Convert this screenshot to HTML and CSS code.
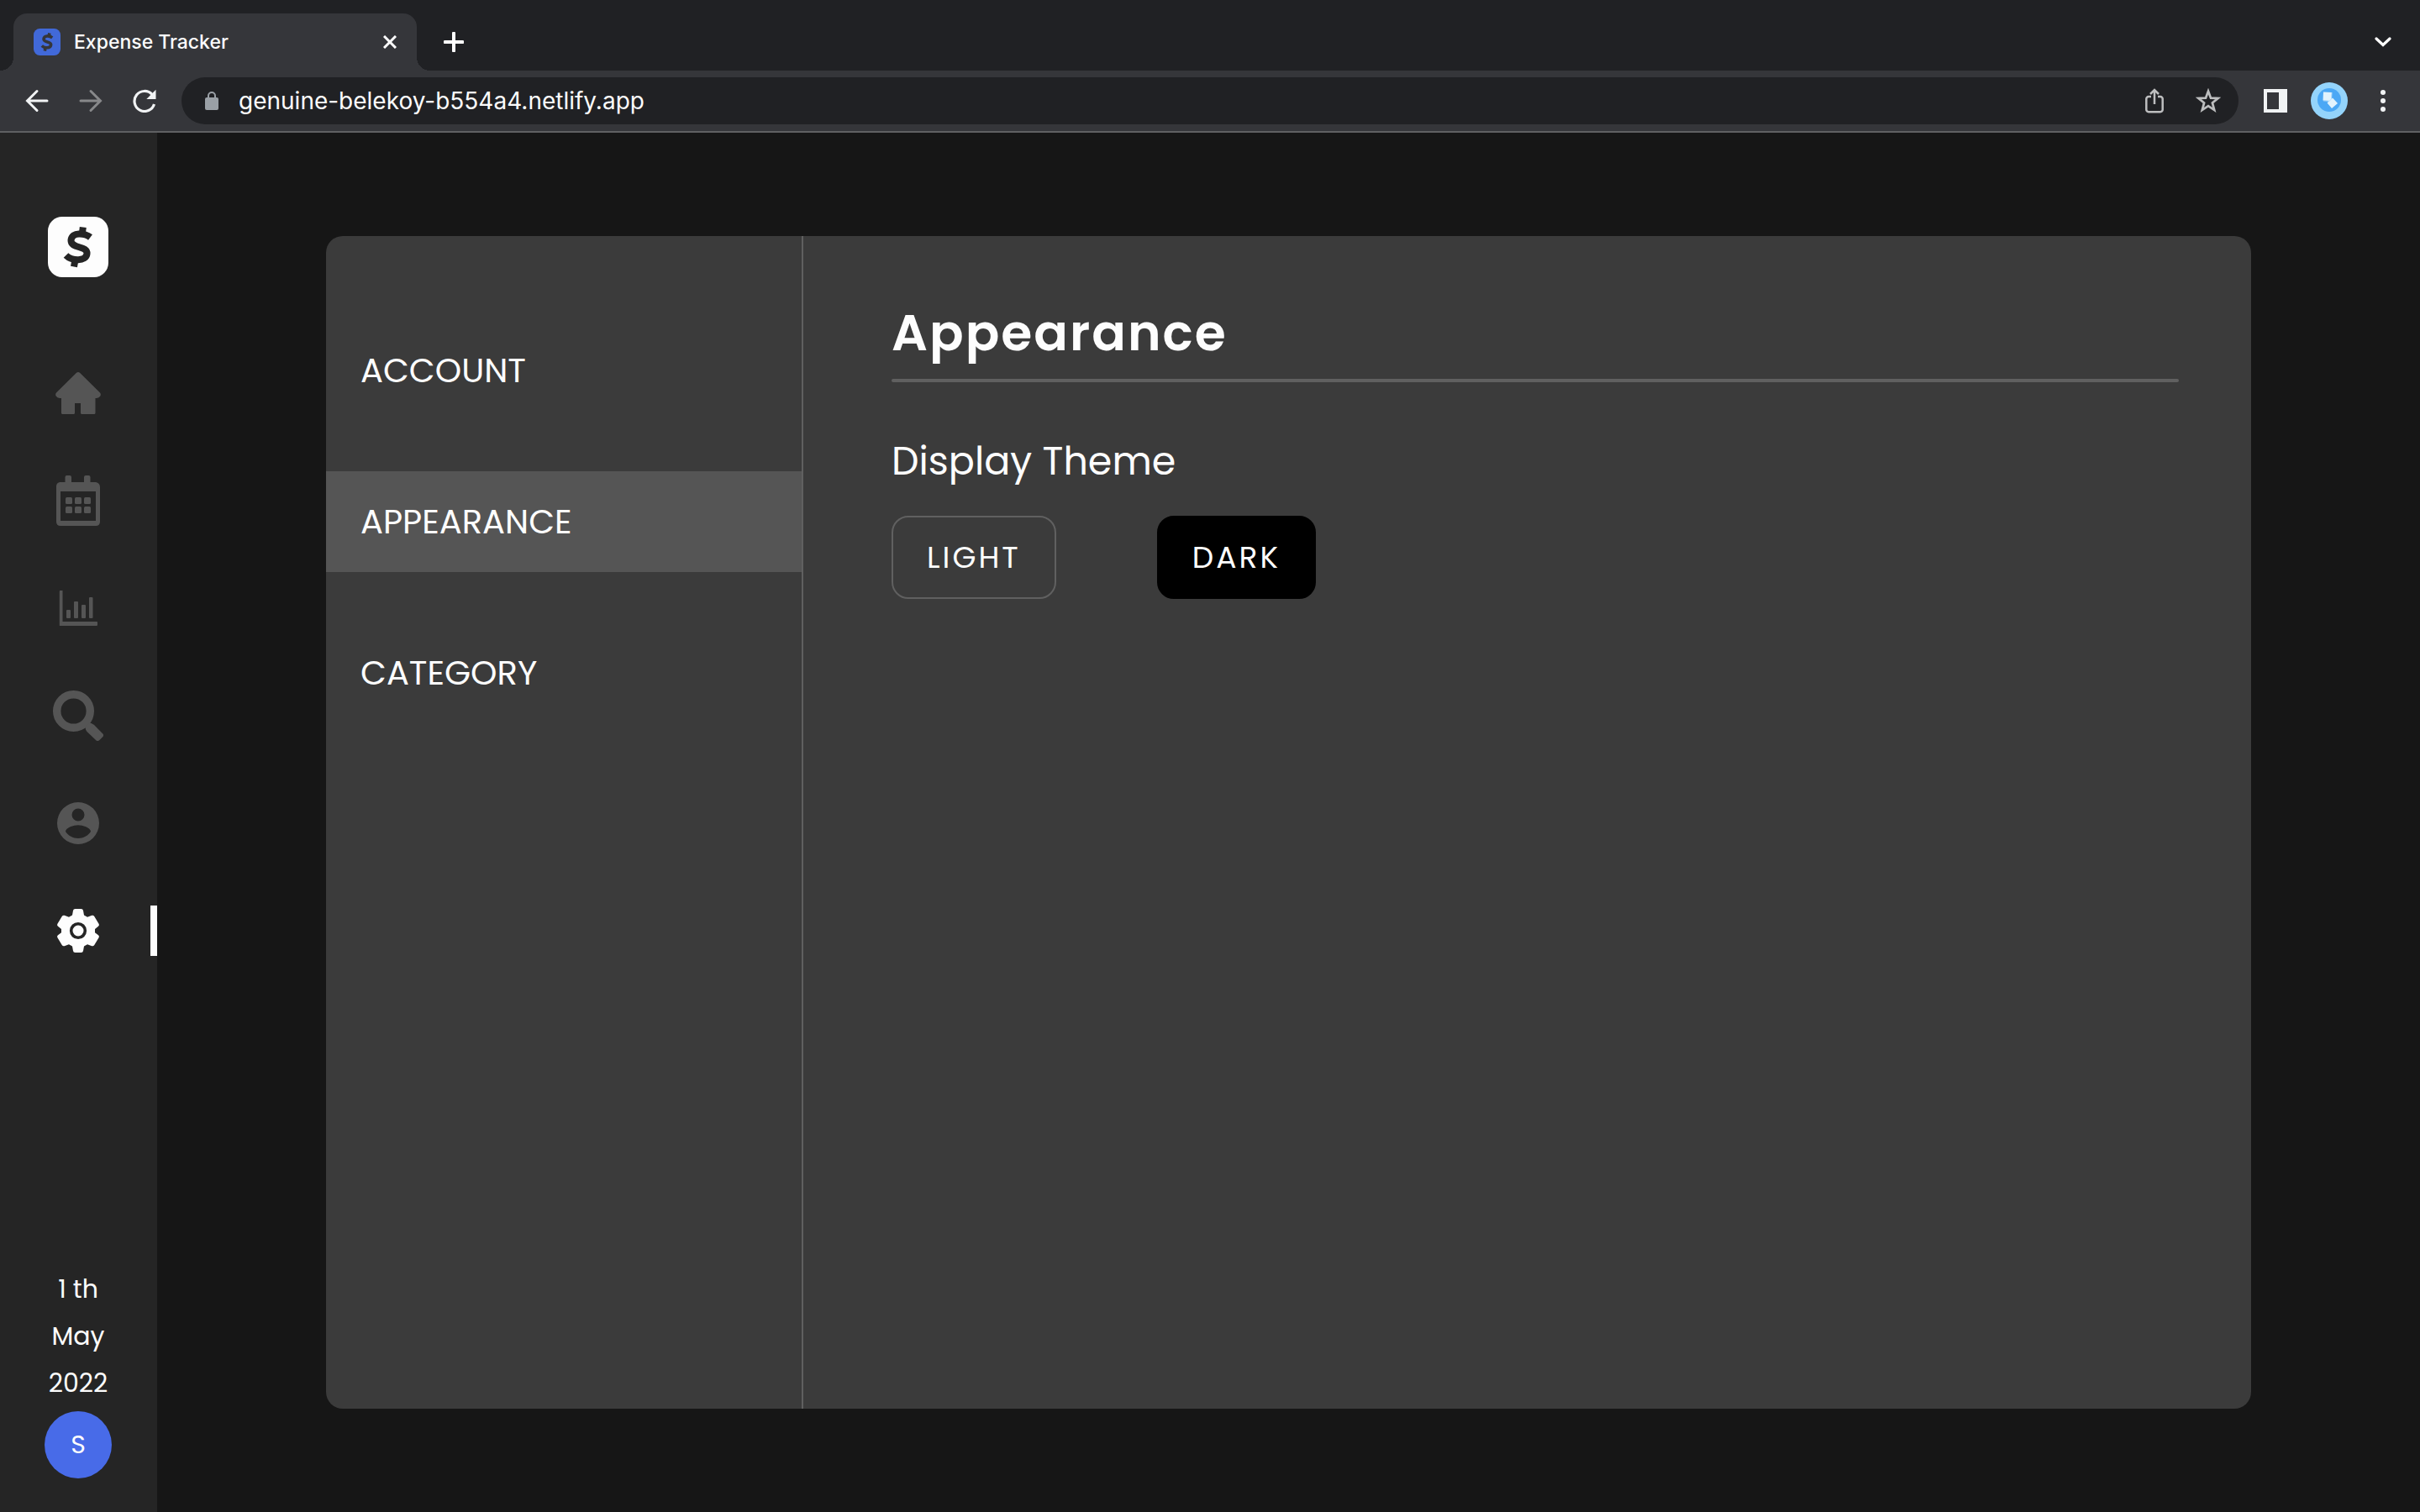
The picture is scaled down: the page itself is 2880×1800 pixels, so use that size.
FILE: index.html
```html
<!DOCTYPE html>
<html lang="en">
<head>
<meta charset="utf-8">
<title>Expense Tracker</title>
<link rel="stylesheet" href="styles.css">
</head>
<body>
<div class="browser">
  <header class="chrome">
    <div class="tab-strip">
      <div class="tab">
        <svg class="favicon" viewBox="0 0 72 72" aria-hidden="true"><rect width="72" height="72" rx="17" fill="#4169d9"/><g fill="none" stroke="#35363a" stroke-width="8" stroke-linejoin="round"><path d="M50 24.500C42 18 28 18 27 28C26.500 39 48 33 46.500 44C45 54 29 53 22 46"/><path d="M41 20L42.500 12M30 60L31.500 51"/></g></svg>
        <span class="tab-title">Expense Tracker</span>
        <button class="icon-button" aria-label="Close tab"><svg width="16" height="16" viewBox="0 0 16 16"><path d="M1 1L15 15M15 1L1 15" stroke="#fff" stroke-width="3"/></svg></button>
      </div>
      <button class="icon-button" aria-label="New tab"><svg width="24" height="24" viewBox="0 0 24 24"><path d="M12 1.500V22.500M1.500 12H22.500" stroke="#fff" stroke-width="4" stroke-linecap="round"/></svg></button>
      <button class="icon-button tab-search" aria-label="Search tabs"><svg width="20" height="12" viewBox="0 0 20 12"><path d="M2 2L10 9.500L18 2" fill="none" stroke="#fff" stroke-width="3.200" stroke-linecap="round"/></svg></button>
    </div>
    <div class="toolbar">
      <div class="history">
        <button class="icon-button" aria-label="Back"><svg width="28" height="28" viewBox="0 0 28 28"><path d="M26 14H3M14 2.500L2.500 14L14 25.500" fill="none" stroke="#f1f3f4" stroke-width="3" stroke-linecap="round"/></svg></button>
        <button class="icon-button" aria-label="Forward"><svg width="28" height="28" viewBox="0 0 28 28"><path d="M2 14H25M14 2.500L25.500 14L14 25.500" fill="none" stroke="#87888a" stroke-width="3" stroke-linecap="round"/></svg></button>
        <button class="icon-button" aria-label="Reload"><svg width="28" height="28" viewBox="0 0 28 28"><path d="M25.500 18A12 12 0 1 1 23 6.500" fill="none" stroke="#f1f3f4" stroke-width="3.200"/><path d="M27.500 .8V12H16.300Z" fill="#f1f3f4"/></svg></button>
      </div>
      <div class="address">
        <svg width="16" height="22" viewBox="0 0 16 22" aria-hidden="true"><rect y="7" width="16" height="15" rx="2" fill="#9aa0a6"/><path d="M4 8V5A4 4 0 0 1 12 5V8" fill="none" stroke="#9aa0a6" stroke-width="2"/></svg>
        <input class="url" aria-label="Address" value="genuine-belekoy-b554a4.netlify.app">
        <button class="icon-button" aria-label="Share"><svg width="22" height="30" viewBox="0 0 22 30"><path d="M7 10H4A2.700 2.700 0 0 0 1.300 12.700V25.500A2.700 2.700 0 0 0 4 28.200H18A2.700 2.700 0 0 0 20.700 25.500V12.700A2.700 2.700 0 0 0 18 10H15M11 19V3M6 7L11 2L16 7" fill="none" stroke="#bdbebf" stroke-width="2.500"/></svg></button>
        <button class="icon-button" aria-label="Bookmark"><svg width="30" height="30" viewBox="0 0 30 30"><path d="M15 3.500L18 11.600L26.500 12L19.900 17.400L22.200 26L15 21.200L7.800 26L10.100 17.400L3.500 12L12 11.600Z" fill="none" stroke="#bdbebf" stroke-width="2.700"/></svg></button>
      </div>
      <button class="icon-button" aria-label="Side panel"><svg width="28" height="28" viewBox="0 0 28 28"><path d="M0 0H28V28H0ZM4 4V24H18V4Z" fill="#f1f3f4" fill-rule="evenodd"/></svg></button>
      <button class="icon-button" aria-label="Profile"><svg width="44" height="44" viewBox="0 0 44 44"><circle cx="22" cy="22" r="22" fill="#94d4fb"/><circle cx="22" cy="21" r="14" fill="#4ba8f5"/><path d="M15 11.500L25 12L24.500 20L26 18.500L32 25L25 31L19.500 24.500L22 22L14.500 21.500Z" fill="#e1f3fd"/><path d="M25 12L24.500 20L22 22.300L15 21.800" fill="none" stroke="#b9e0fb"/></svg></button>
      <button class="icon-button" aria-label="Menu"><svg width="28" height="28" viewBox="0 0 28 28" fill="#f1f3f4"><circle cx="14" cy="4" r="3"/><circle cx="14" cy="14" r="3"/><circle cx="14" cy="24" r="3"/></svg></button>
    </div>
  </header>

  <div class="app">
    <aside class="sidebar">
      <a class="logo" href="#" aria-label="Expense Tracker"><svg width="72" height="72" viewBox="0 0 72 72"><rect width="72" height="72" rx="17" fill="#fdfdfd"/><g fill="none" stroke="#252525" stroke-width="8" stroke-linejoin="round"><path d="M50.500 24.500C44 19.500 28.500 17.500 27.500 28C27 38.500 47.500 34 46.500 44C45.500 54 28 52.500 21.500 46"/><path d="M40.800 20.500L41.800 12.500M31 59.500L32.500 51"/></g></svg></a>
      <nav class="side-nav">
        <a class="side-link" href="#" aria-label="Home"><svg width="54" height="52" viewBox="0 0 54 52"><path d="M25 1.800Q27 0 29 1.800L53 25.500Q54.500 27.500 53.300 29.600Q52 32 49 32H47.500V49.500Q47.500 51 46 51H31.500Q30 51 30 49.500V38H23V49.500Q23 51 21.500 51H8.500Q7 51 7 49.500V32H5Q2 32 .7 29.600Q-.5 27.500 1 25.500Z" fill="currentColor"/></svg></a>
        <a class="side-link" href="#" aria-label="Calendar"><svg width="54" height="60" viewBox="0 0 54 60" fill="currentColor"><path fill-rule="evenodd" d="M5 8H11.500V2Q11.500 0 13.500 0H17Q19 0 19 2V8H34V2Q34 0 36 0H39.500Q41.500 0 41.500 2V8H48Q53 9 53 14V55Q53 60 48 60H6Q1 60 1 55V13Q1 9 5 8ZM6 19V54H48V19Z"/><rect x="12" y="26" width="8" height="8" rx="1.500"/><rect x="23" y="26" width="8" height="8" rx="1.500"/><rect x="34" y="26" width="8" height="8" rx="1.500"/><rect x="12" y="37" width="8" height="8" rx="1.500"/><rect x="23" y="37" width="8" height="8" rx="1.500"/><rect x="34" y="37" width="8" height="8" rx="1.500"/></svg></a>
        <a class="side-link" href="#" aria-label="Statistics"><svg width="46" height="42" viewBox="0 0 46 42" fill="currentColor"><path d="M1.200 0H4.500V37H45Q46 37 46 38V41Q46 42 45 42H.8V1Z"/><rect x="9" y="23" width="5" height="10" rx="1"/><rect x="18" y="13" width="5" height="20" rx="1"/><rect x="27" y="17" width="5" height="16" rx="1"/><rect x="36" y="8" width="4.500" height="25" rx="1"/></svg></a>
        <a class="side-link" href="#" aria-label="Search"><svg width="60" height="60" viewBox="0 0 60 60"><circle cx="24.500" cy="24.500" r="19.800" fill="none" stroke="currentColor" stroke-width="9.400"/><path d="M38.500 43.500L39 46.500Q39.500 48 41 49.500L51.500 59.500Q53.500 61 55.500 59L59 55.500Q61 53.500 59.300 51.500L49 41Q46 38.500 43.500 38.500Z" fill="currentColor"/></svg></a>
        <a class="side-link" href="#" aria-label="Profile"><svg width="50" height="50" viewBox="0 0 50 50"><path fill-rule="evenodd" fill="currentColor" d="M25 0A25 25 0 1 0 25 50A25 25 0 1 0 25 0ZM25 7.500A7.500 7.500 0 1 1 25 22.500A7.500 7.500 0 1 1 25 7.500ZM25 43C18.800 43 13.200 39.800 10 35C10.100 30 20 27.200 25 27.200C30 27.200 39.900 30 40 35C36.800 39.800 31.200 43 25 43Z"/></svg></a>
        <a class="side-link side-link-active" href="#" aria-label="Settings" aria-current="page"><svg width="52" height="54" viewBox="0 0 52 54"><path fill="currentColor" d="M20 3Q20.300 1 22.500 1H29.500Q31.700 1 32 3L33 8.500L37 10.800L42.300 8.800Q44.200 8.300 45.300 10L50.700 19Q51.500 20.500 50 21.800L46 25V29.200L50 32.300Q51.500 33.500 50.700 35L45.300 44Q44.200 45.700 42.300 45.200L37 43.200L33 45.500L32 51Q31.700 53 29.500 53H22.500Q20.300 53 20 51L19 45.500L15 43.200L9.700 45.200Q7.800 45.700 6.700 44L1.300 35Q.5 33.500 2 32.300L6 29.200V25L2 21.800Q.5 20.500 1.300 19L6.700 10Q7.800 8.300 9.700 8.800L15 10.800L19 8.500Z"/><circle cx="26" cy="27" r="8.300" fill="none" stroke="#252525" stroke-width="3.600"/></svg></a>
      </nav>
      <div class="today">
        <time class="date" datetime="2022-05-01"><span>1 th</span><span>May</span><span>2022</span></time>
        <button class="user">S</button>
      </div>
    </aside>

    <main class="page">
      <section class="settings">
        <nav class="settings-nav">
          <a class="settings-link" href="#">ACCOUNT</a>
          <a class="settings-link settings-link-active" href="#" aria-current="true">APPEARANCE</a>
          <a class="settings-link" href="#">CATEGORY</a>
        </nav>
        <div class="panel">
          <h1 class="panel-title">Appearance</h1>
          <hr class="rule">
          <h2 class="panel-subtitle">Display Theme</h2>
          <div class="themes">
            <button class="theme">LIGHT</button>
            <button class="theme theme-dark">DARK</button>
          </div>
        </div>
      </section>
    </main>
  </div>
</div>
</body>
</html>
```
FILE: styles.css
```css
* {
  box-sizing: border-box;
}

body {
  margin: 0;
  background: #161616;
  color: #fdfdfd;
  font-family: Poppins, Inter, "Liberation Sans", sans-serif;
}

button,
input {
  margin: 0;
  padding: 0;
  border: 0;
  background: none;
  color: inherit;
  font: inherit;
}

a {
  color: inherit;
  text-decoration: none;
}

svg {
  display: block;
  flex: none;
}

.browser {
  display: flex;
  flex-direction: column;
  min-height: 100vh;
}

/* Browser window */

.chrome {
  border-bottom: 2px solid #5f6062;
  background: #35363a;
  font-family: Inter, "Liberation Sans", sans-serif;
}

.icon-button {
  display: flex;
  align-items: center;
  justify-content: center;
}

.tab-strip {
  display: flex;
  align-items: center;
  gap: 32px;
  height: 84px;
  padding: 16px 34px 0 16px;
  background: #202124;
}

.tab-search {
  margin-left: auto;
}

.tab {
  position: relative;
  display: flex;
  align-items: center;
  gap: 16px;
  width: 480px;
  height: 68px;
  padding: 0 24px;
  border-radius: 16px 16px 0 0;
  background: #35363a;
}

.tab::before,
.tab::after {
  position: absolute;
  bottom: 0;
  width: 16px;
  height: 16px;
  content: "";
}

.tab::before {
  right: 100%;
  background: radial-gradient(circle at 0 0, #202124 16px, #35363a 16px);
}

.tab::after {
  left: 100%;
  background: radial-gradient(circle at 100% 0, #202124 16px, #35363a 16px);
}

.favicon {
  width: 32px;
  height: 32px;
}

.tab-title {
  flex: 1;
  font-size: 23px;
  font-weight: 500;
  line-height: 32px;
}

.toolbar {
  display: flex;
  align-items: center;
  gap: 28px;
  height: 72px;
  padding: 0 30px;
}

.history {
  display: flex;
  gap: 36px;
}

.address {
  display: flex;
  flex: 1;
  align-items: center;
  gap: 38px;
  height: 56px;
  margin: 0 2px;
  padding: 0 21px 0 28px;
  border-radius: 28px;
  background: #202124;
}

.url {
  flex: 1;
  min-width: 0;
  margin-left: -14px;
  font-size: 28px;
  line-height: 40px;
}

/* App */

.app {
  display: flex;
  flex: 1;
}

.sidebar {
  display: flex;
  flex-direction: column;
  align-items: center;
  width: 187px;
  padding: 100px 1px 40px 0;
  background: #252525;
}

.side-nav {
  display: flex;
  flex-direction: column;
  align-self: stretch;
  gap: 68px;
  margin: 108px -1px 0 0;
}

.side-link {
  display: flex;
  align-items: center;
  justify-content: center;
  height: 60px;
  border: solid transparent;
  border-width: 0 8px 0 7px;
  color: #555;
}

.side-link-active {
  border-right-color: #fdfdfd;
  color: #fdfdfd;
}

.today {
  display: flex;
  flex-direction: column;
  align-items: center;
  gap: 5px;
  margin-top: auto;
}

.date {
  display: flex;
  flex-direction: column;
  align-items: center;
  font-size: 30px;
  line-height: 56px;
}

.user {
  width: 80px;
  height: 80px;
  border-radius: 50%;
  background: #486be8;
  font-size: 30px;
}

.page {
  display: flex;
  flex: 1;
  padding: 123px 201px;
}

.settings {
  display: flex;
  flex: 1;
  overflow: hidden;
  border-radius: 20px;
  background: #3b3b3b;
}

.settings-nav {
  display: flex;
  flex-direction: column;
  gap: 60px;
  width: 568px;
  padding-top: 100px;
  border-right: 2px solid #606060;
}

.settings-link {
  padding: 0 41px;
  font-size: 40px;
  line-height: 120px;
}

.settings-link-active {
  background: #555;
}

.panel {
  flex: 1;
  padding: 70px 86px 70px 105px;
}

.panel-title {
  margin: 0;
  font-size: 60px;
  font-weight: 600;
  letter-spacing: 2px;
  line-height: 90px;
}

.rule {
  height: 4px;
  margin: 10px 0 59px;
  border: 0;
  border-radius: 2px;
  background: #606060;
}

.panel-subtitle {
  margin: 0;
  font-size: 46px;
  font-weight: 400;
  line-height: 70px;
}

.themes {
  display: flex;
  gap: 120px;
  margin-top: 30px;
}

.theme {
  height: 99px;
  padding: 0 40px;
  border: 2px solid #606060;
  border-radius: 20px;
  font-size: 36px;
  letter-spacing: 3px;
}

.theme-dark {
  border-color: #000;
  background: #000;
}
```
